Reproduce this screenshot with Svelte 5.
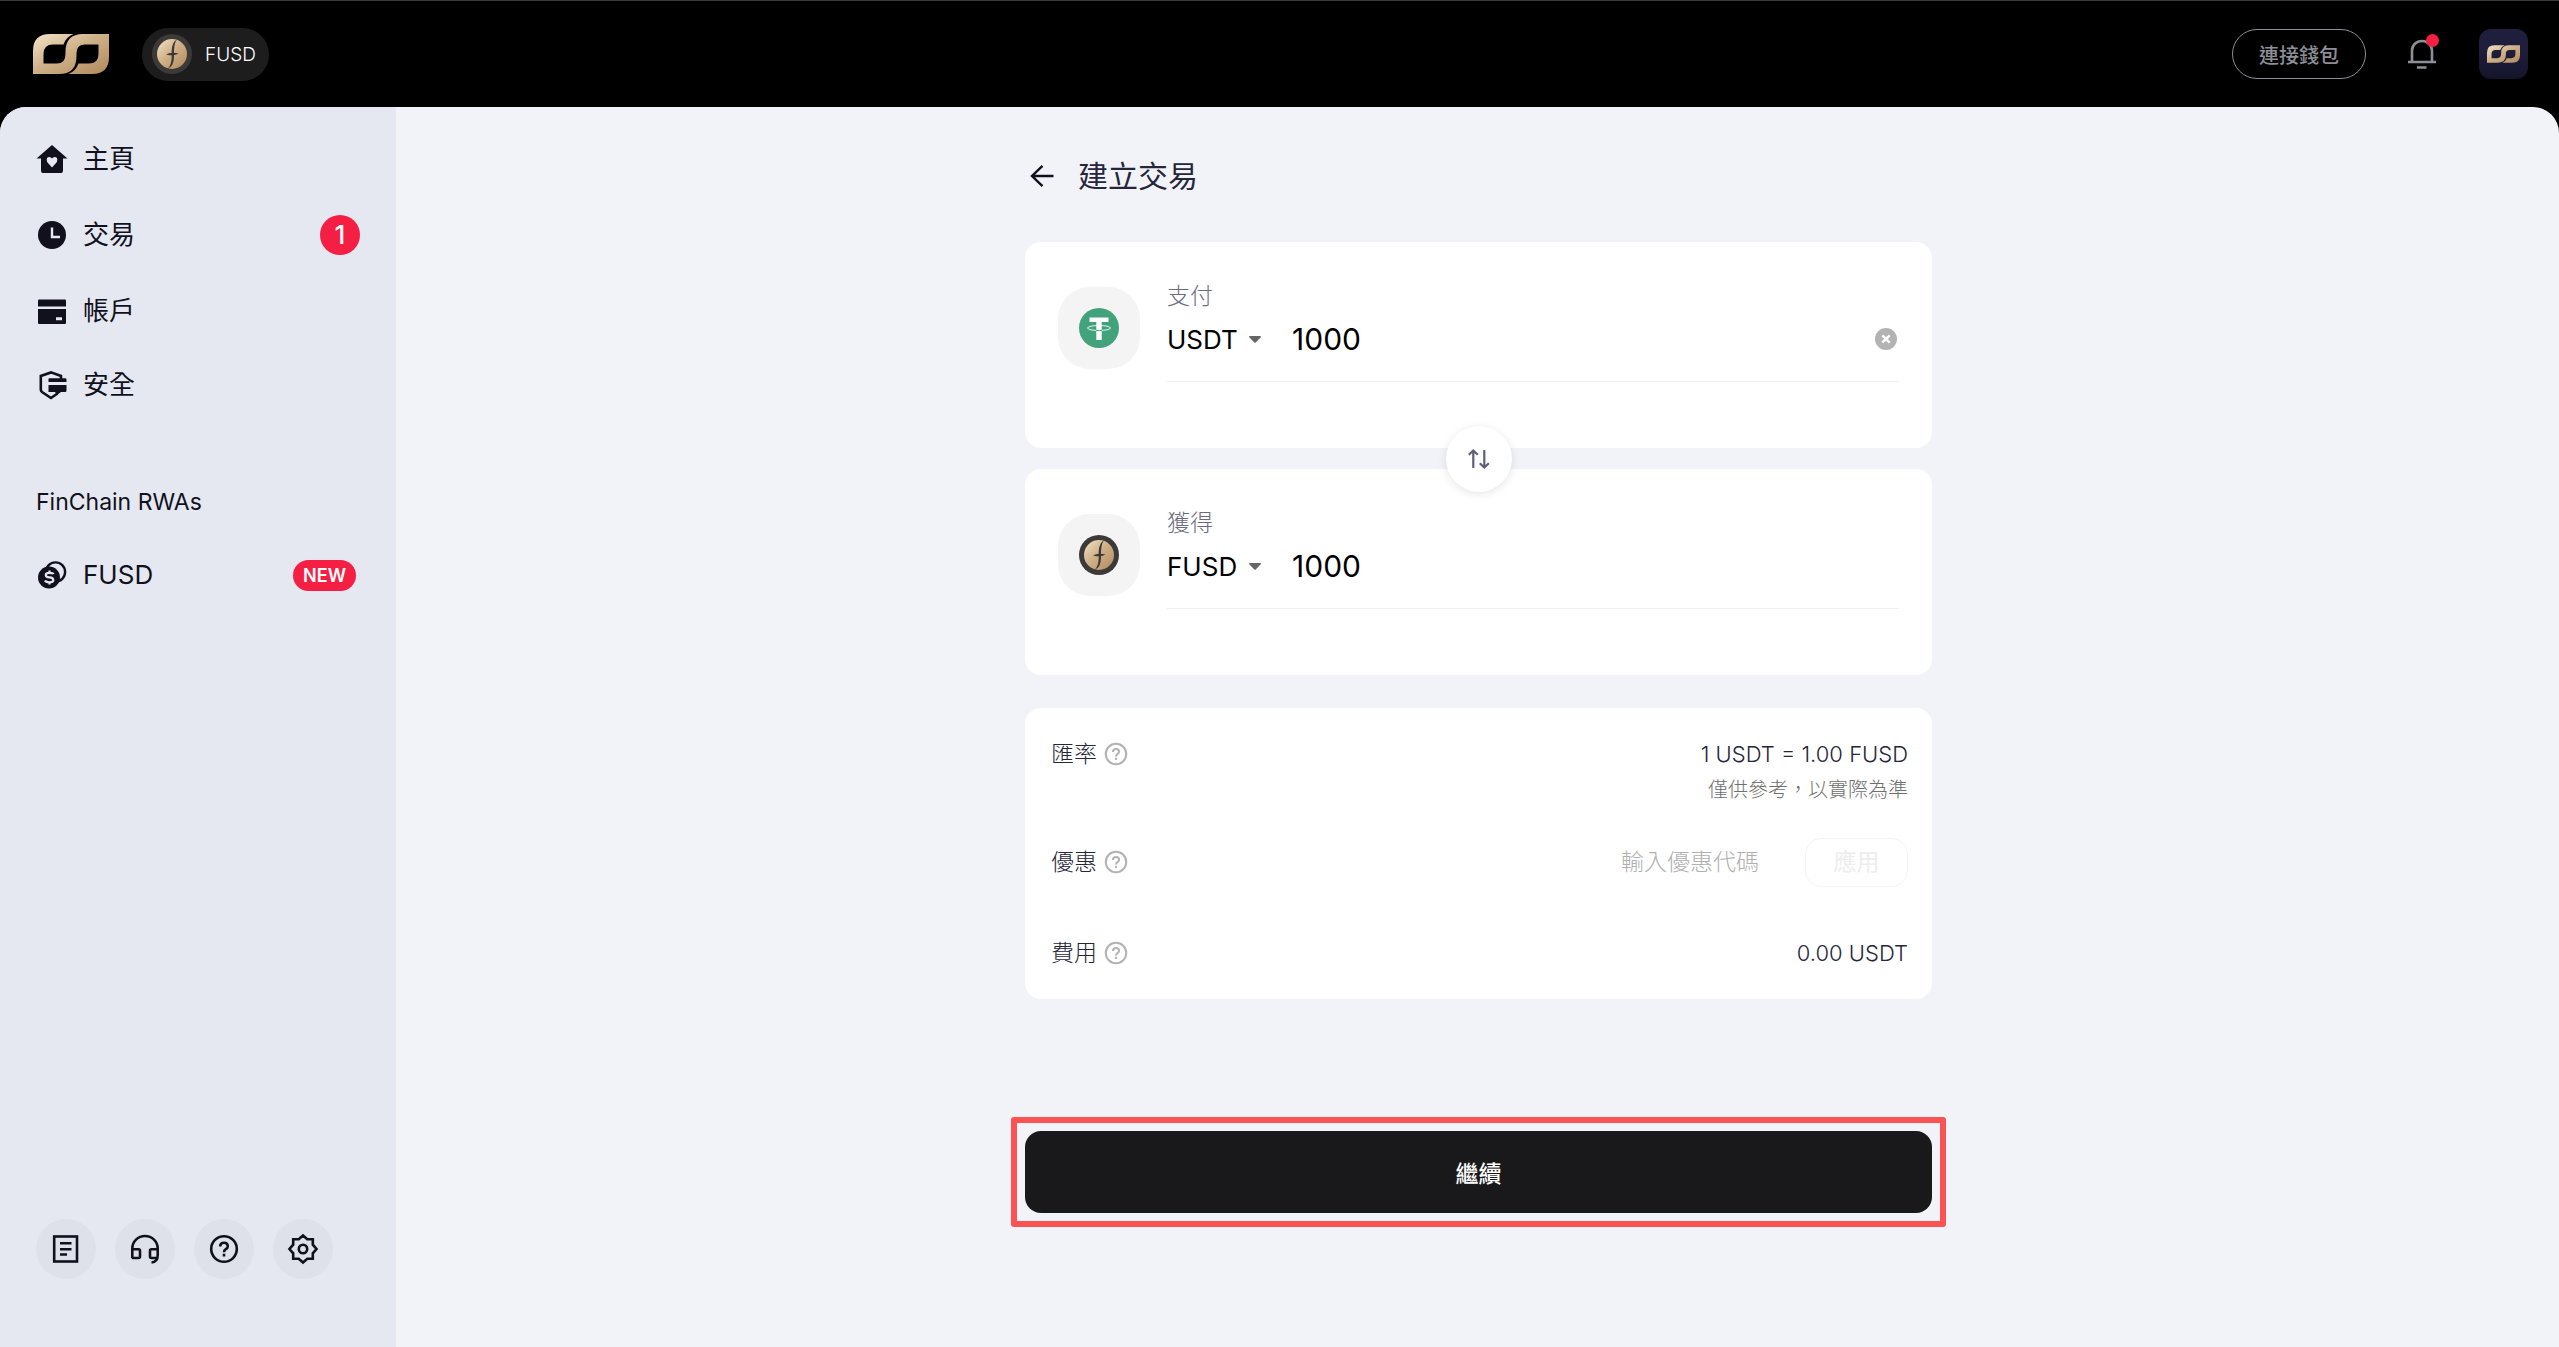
<script lang="ts">
	const navItems = [
		{ icon: 'home', label: '主頁', count: 0 },
		{ icon: 'clock', label: '交易', count: 1 },
		{ icon: 'card', label: '帳戶', count: 0 },
		{ icon: 'shield', label: '安全', count: 0 }
	];
	const tools = [
		{ icon: 'doc', title: '文件' },
		{ icon: 'support', title: '客服' },
		{ icon: 'help', title: '幫助' },
		{ icon: 'gear', title: '設定' }
	];

	let pay = $state({ id: 'pay', label: '支付', token: 'USDT', amount: '1000' });
	let receive = $state({ id: 'receive', label: '獲得', token: 'FUSD', amount: '1000' });
	let promo = $state('');
	let sides = $derived([pay, receive]);

	function swap() {
		const token = pay.token;
		pay.token = receive.token;
		receive.token = token;
	}
</script>

{#snippet logo()}
	<svg class="logo" viewBox="0 0 76 40" aria-hidden="true">
		<defs>
			<linearGradient id="gold" x1="0" y1="0" x2="1" y2="1">
				<stop offset="0" stop-color="#f3e4c8" />
				<stop offset="0.45" stop-color="#d0b289" />
				<stop offset="1" stop-color="#b08a5c" />
			</linearGradient>
		</defs>
		<path
			fill="url(#gold)"
			d="M0 40V17Q0 0 17 0H40.500Q33 3 30.500 10.500H20Q10.500 10.500 10.500 20V29.500H24Q32.500 29.500 32.500 20V18Q32.500 0 50 0H76V23Q76 40 59 40H35.500Q43 37 45.500 29.500H56Q65.500 29.500 65.500 20V10.500H52Q43.500 10.500 43.500 19V22Q43.500 40 26 40Z"
		/>
	</svg>
{/snippet}

{#snippet coin()}
	<svg class="coin" viewBox="-20 -20 40 40" aria-hidden="true">
		<circle r="20" fill="#3b3a38" />
		<circle r="15" fill="url(#gold)" />
		<path
			d="M5 -14.500Q0 -12.500 -0.300 -3V3Q-0.500 11 -4 14.500Q1.800 12.500 2 3V-3Q2.200 -11 5 -14.500Z"
			fill="#3b3a38"
		/>
		<path d="M-6 0.400Q-3 -0.900 0 -1.200Q4 -0.900 6.500 -0.400Q4 1.200 1 1.300Q-3 1.300 -6 0.400Z" fill="#3b3a38" />
	</svg>
{/snippet}

{#snippet helpIcon()}
	<svg viewBox="0 0 30 30" fill="none" stroke="currentColor" stroke-width="2.6" aria-hidden="true">
		<circle cx="15" cy="15" r="12.800" />
		<path d="M11.200 12.400Q11.200 8.800 15 8.800T18.800 12.200Q18.800 14 16.800 15.200Q15 16.300 15 18.200M15 19.800V22.400" />
	</svg>
{/snippet}

<div class="page">
	<header class="topbar">
		<a class="brand" href="#home" aria-label="FinChain">{@render logo()}</a>
		<button class="token-pill" type="button">
			{@render coin()}
			<span>FUSD</span>
		</button>
		<div class="topbar-right">
			<button class="connect" type="button">連接錢包</button>
			<button class="bell" type="button" aria-label="通知">
				<svg viewBox="0 0 28 32" fill="none" stroke="#8d8f96" stroke-width="2.6">
					<path d="M4 23V12.500A10 9.500 0 0 1 24 12.500V23M0 24H28M9 29.500H18.500" />
				</svg>
				<span class="dot"></span>
			</button>
			<button class="avatar" type="button" aria-label="個人資料">{@render logo()}</button>
		</div>
	</header>

	<div class="body">
		<aside class="sidebar">
			<nav class="nav">
				{#each navItems as item}
					<a class="nav-item" href="#{item.icon}">
						<svg class="nav-icon" viewBox="0 0 30 30" fill="#11111d" aria-hidden="true">
							{#if item.icon === 'home'}
								<path d="M15 1L30.500 14.500H26V27Q26 29 24 29H6Q4 29 4 27V14.500H-0.500Z" />
								<path
									fill="#e5e8f1"
									d="M15 23.500L10.300 18.200Q8.800 14.800 11 13.300Q13.500 12.200 15 14.500Q16.500 12.200 19 13.300Q21.200 14.800 19.700 18.200Z"
								/>
							{:else if item.icon === 'clock'}
								<circle cx="15" cy="15" r="14" />
								<path d="M15 7.500V17H23" fill="none" stroke="#e5e8f1" stroke-width="2.4" />
							{:else if item.icon === 'card'}
								<path d="M2 3.500H28Q29 3.500 29 4.500V10.500H1V4.500Q1 3.500 2 3.500Z" />
								<path fill-rule="evenodd" d="M1 13H29V27Q29 28 28 28H2Q1 28 1 27ZM19 21.300V24.300H25V21.300Z" />
							{:else}
								<path
									d="M24 9V6L14 2.400L3.800 6V19.500Q3.800 21 5 22L14 28L20.500 23.500"
									fill="none"
									stroke="#11111d"
									stroke-width="2.6"
								/>
								<path d="M12 8.300H28Q29.500 8.300 29.500 9.500V12H11.500V8.800ZM11.500 15H29.500V20.500Q29.500 22 28 22H24L20 25L18 22H11.500Z" />
							{/if}
						</svg>
						<span>{item.label}</span>
						{#if item.count}
							<span class="count">{item.count}</span>
						{/if}
					</a>
				{/each}
			</nav>

			<h2 class="group">FinChain RWAs</h2>
			<a class="nav-item" href="#fusd">
				<svg class="nav-icon" viewBox="0 0 30 30" aria-hidden="true">
					<circle cx="18.500" cy="12" r="9.600" fill="none" stroke="#11111d" stroke-width="2.4" />
					<circle cx="12" cy="17.500" r="11" fill="#11111d" />
					<path
						d="M16.500 14.200Q16 12.800 12.500 12.800Q8.800 12.800 8.800 15T12.500 17.400T16.300 20T12.300 22.300Q8.800 22.300 8 20.500M12.500 10.500V13M12.500 22V24.600"
						fill="none"
						stroke="#e5e8f1"
						stroke-width="2.2"
					/>
				</svg>
				<span>FUSD</span>
				<span class="new">NEW</span>
			</a>

			<div class="tools">
				{#each tools as tool}
					<button class="tool" type="button" aria-label={tool.title}>
						{#if tool.icon === 'help'}
							{@render helpIcon()}
						{:else}
							<svg viewBox="0 0 30 30" fill="none" stroke="currentColor" stroke-width="2.6" aria-hidden="true">
								{#if tool.icon === 'doc'}
									<rect x="3.200" y="2.500" width="22.800" height="25" />
									<path d="M9 9.300H20.500M9 15.200H20.500M9 20.500H16" />
								{:else if tool.icon === 'support'}
									<path d="M2.300 24V14.500A12.700 12.500 0 0 1 27.700 14.500V21Q27.700 28 21.500 28.500M2.300 15.200H8.500Q10 15.200 10 16.700V22.500Q10 24 8.500 24H3.500Q2.300 24 2.300 22.500M27.700 15.200H21.500Q20 15.200 20 16.700V22.500Q20 24 21.500 24H27" />
								{:else}
									<path d="M15 1.500L19.300 5.200H24.800V10.700L28.500 15L24.800 19.300V24.800H19.300L15 28.500L10.700 24.800H5.200V19.300L1.500 15L5.200 10.700V5.200H10.700Z" />
									<circle cx="15" cy="15" r="4.200" />
								{/if}
							</svg>
						{/if}
					</button>
				{/each}
			</div>
		</aside>

		<main class="main">
			<form class="exchange" onsubmit={(e) => e.preventDefault()}>
				<div class="title-row">
					<button class="back" type="button" aria-label="返回">
						<svg viewBox="0 0 24 24" fill="none" stroke="#11111d" stroke-width="2.4">
							<path d="M23.500 12H2M12.500 1.800L2 12L12.500 22.200" />
						</svg>
					</button>
					<h1>建立交易</h1>
				</div>

				<div class="pair">
					{#each sides as side}
						<section class="card currency">
							<div class="token-box">
								{#if side.token === 'USDT'}
									<svg class="coin" viewBox="-20 -20 40 40" aria-hidden="true">
										<circle r="20" fill="#41a27c" />
										<ellipse rx="11.500" ry="2.500" fill="none" stroke="#fff" stroke-width="0.9" />
										<path d="M-9.500 -10.500H9.500V-6H2.700V12H-2.700V-6H-9.500Z" fill="#fff" />
										<path d="M-3 2.500H3" stroke="#41a27c" stroke-width="0.9" />
									</svg>
								{:else}
									{@render coin()}
								{/if}
							</div>
							<div class="field">
								<label class="field-label" for={side.id}>{side.label}</label>
								<div class="field-row">
									<select class="token" bind:value={side.token} aria-label="{side.label}幣種">
										<option>{side.token}</option>
									</select>
									<svg class="caret" viewBox="0 0 12 7" aria-hidden="true">
										<path d="M0.500 0H11.500L12 1L6.500 6.800H5.500L0 1Z" fill="#666" />
									</svg>
									<input class="amount" id={side.id} type="text" inputmode="decimal" bind:value={side.amount} />
									{#if side.id === 'pay'}
										<button class="clear" type="button" aria-label="清除" onclick={() => (side.amount = '')}>
											<svg viewBox="0 0 22 22">
												<circle cx="11" cy="11" r="11" fill="#b3b3b3" />
												<path d="M7.300 7.300L14.700 14.700M14.700 7.300L7.300 14.700" stroke="#fff" stroke-width="2.4" />
											</svg>
										</button>
									{/if}
								</div>
							</div>
						</section>
					{/each}
					<button class="swap" type="button" aria-label="交換" onclick={swap}>
						<svg viewBox="0 0 22 20" fill="none" stroke="#5f5f78" stroke-width="2.2">
							<path d="M5.300 19V2M0.800 5.800L5.300 1.500L9.800 5.800M16.300 1V18M11.800 14.200L16.300 18.500L20.800 14.200" />
						</svg>
					</button>
				</div>

				<section class="card details">
					<div class="row rate">
						<span class="row-label">匯率 {@render helpIcon()}</span>
						<div class="row-value">
							<div>1 USDT = 1.00 FUSD</div>
							<div class="note">僅供參考，以實際為準</div>
						</div>
					</div>
					<div class="row">
						<label class="row-label" for="promo">優惠 {@render helpIcon()}</label>
						<input class="promo" id="promo" type="text" placeholder="輸入優惠代碼" bind:value={promo} />
						<button class="apply" type="button" disabled={!promo}>應用</button>
					</div>
					<div class="row">
						<span class="row-label">費用 {@render helpIcon()}</span>
						<div class="row-value">0.00 USDT</div>
					</div>
				</section>

				<div class="highlight">
					<button class="submit" type="submit">繼續</button>
				</div>
			</form>
		</main>
	</div>
</div>

<style>
	:global(body) {
		margin: 0;
		background: #000;
	}

	.page {
		display: flex;
		flex-direction: column;
		min-height: 100vh;
		box-sizing: border-box;
		border-top: 1px solid #3a3a3a;
		background: #000;
		color: #11111d;
		font-family: Inter, 'Noto Sans CJK TC', sans-serif;
		font-size: 26px;
	}

	button,
	input,
	select {
		margin: 0;
		padding: 0;
		border: 0;
		outline: 0;
		background: none;
		color: inherit;
		font: inherit;
	}

	button {
		display: flex;
		align-items: center;
		justify-content: center;
		cursor: pointer;
	}

	a {
		color: inherit;
		text-decoration: none;
	}

	svg {
		display: block;
		flex: none;
		overflow: visible;
	}

	/* top bar */
	.topbar {
		display: flex;
		align-items: center;
		height: 106px;
		padding: 0 31px 0 33px;
	}

	.logo {
		width: 76px;
		height: 40px;
	}

	.coin {
		width: 40px;
		height: 40px;
	}

	.token-pill {
		gap: 13px;
		height: 53px;
		margin-left: 33px;
		padding: 0 13px 0 10px;
		border-radius: 27px;
		background: #1d1d1d;
		color: #fff;
		font-size: 19px;
		font-weight: 300;
	}

	.topbar-right {
		display: flex;
		align-items: center;
		margin-left: auto;
	}

	.connect {
		height: 50px;
		padding: 0 26px;
		border: 1px solid #8d8f96;
		border-radius: 25px;
		color: #8d8f96;
		font-size: 20px;
		font-weight: 500;
	}

	.bell {
		position: relative;
		margin: 0 43px 0 42px;
	}

	.bell svg {
		width: 28px;
		height: 32px;
	}

	.dot {
		position: absolute;
		top: -4px;
		right: -3px;
		width: 13px;
		height: 13px;
		border-radius: 50%;
		background: #f51f44;
	}

	.avatar {
		width: 49px;
		height: 50px;
		border-radius: 12px;
		background: linear-gradient(#1f1f3d 40%, #14142b);
	}

	.avatar .logo {
		width: 33px;
		height: 18px;
	}

	.body {
		display: flex;
		flex: 1;
		overflow: hidden;
		border-radius: 26px 26px 0 0;
		background: #f2f3f9;
	}

	/* sidebar */
	.sidebar {
		display: flex;
		flex: none;
		flex-direction: column;
		width: 396px;
		box-sizing: border-box;
		padding: 34px 36px 68px;
		background: #e5e8f1;
	}

	.nav {
		display: flex;
		flex-direction: column;
		gap: 38px;
	}

	.nav-item {
		display: flex;
		align-items: center;
		min-height: 36px;
		line-height: 36px;
	}

	.nav-icon {
		width: 30px;
		height: 30px;
		margin: 0 16px 0 1px;
	}

	.count,
	.new {
		margin-left: auto;
		background: #f51f44;
		color: #fff;
		text-align: center;
	}

	.count {
		width: 40px;
		border-radius: 50%;
		line-height: 40px;
		font-weight: 500;
	}

	.new {
		margin-right: 4px;
		padding: 0 10px;
		border-radius: 16px;
		font-size: 18px;
		font-weight: 600;
		line-height: 31px;
	}

	.group {
		margin: 81px 0 37px;
		font-size: 23px;
		font-weight: 400;
		line-height: 36px;
	}

	.tools {
		display: flex;
		gap: 19px;
		margin-top: auto;
	}

	.tool {
		width: 60px;
		height: 60px;
		border-radius: 50%;
		background: #dee1e9;
	}

	.tool svg {
		width: 30px;
		height: 30px;
	}

	/* exchange form */
	.main {
		display: flex;
		flex: 1;
		justify-content: center;
		min-width: 0;
		padding: 45px 32px 45px 34px;
	}

	.exchange {
		width: 100%;
		max-width: 907px;
	}

	.title-row {
		display: flex;
		align-items: center;
		gap: 24px;
		height: 48px;
		margin-bottom: 42px;
		padding-left: 5px;
	}

	.back svg {
		width: 24px;
		height: 24px;
	}

	h1 {
		margin: 0;
		color: #26263a;
		font-size: 30px;
		font-weight: 400;
		line-height: 48px;
	}

	.card {
		border-radius: 16px;
		background: #fff;
	}

	.pair {
		position: relative;
		display: flex;
		flex-direction: column;
		gap: 21px;
	}

	.currency {
		display: flex;
		gap: 27px;
		padding: 39px 33px 66px;
	}

	.token-box {
		display: flex;
		flex: none;
		align-items: center;
		justify-content: center;
		width: 82px;
		height: 82px;
		margin-top: 6px;
		border-radius: 32px;
		background: #f4f4f4;
	}

	.field {
		flex: 1;
		min-width: 0;
		padding-bottom: 14px;
		border-bottom: 1px solid #f0f0f0;
	}

	.field-label {
		display: block;
		color: #6b6b80;
		font-size: 23px;
		font-weight: 300;
		line-height: 30px;
	}

	.field-row {
		display: flex;
		align-items: center;
		height: 56px;
		color: #000;
	}

	.token {
		appearance: none;
	}

	.caret {
		width: 12px;
		height: 7px;
		margin: 0 31px 0 11px;
	}

	.amount {
		flex: 1;
		min-width: 0;
		font-size: 30px;
	}

	.clear {
		margin-right: 2px;
	}

	.clear svg {
		width: 22px;
		height: 22px;
	}

	.swap {
		position: absolute;
		top: calc(50% - 33px);
		left: calc(50% - 33px);
		width: 66px;
		height: 66px;
		border-radius: 50%;
		background: #fff;
		box-shadow: 0 2px 10px rgba(0, 0, 0, 0.1);
	}

	.swap svg {
		width: 22px;
		height: 20px;
	}

	.details {
		display: flex;
		flex-direction: column;
		gap: 17px;
		margin-top: 33px;
		padding: 26px 24px 9px 26px;
		color: #26263a;
		font-size: 23px;
		font-weight: 300;
		line-height: 36px;
	}

	.row {
		display: flex;
		align-items: center;
		min-height: 74px;
		box-sizing: border-box;
	}

	.rate {
		align-items: flex-start;
		padding-top: 2px;
	}

	.row-label {
		display: flex;
		align-items: center;
		gap: 7px;
	}

	.row-label svg {
		width: 24px;
		height: 24px;
		color: #b3b3b3;
	}

	.row-value {
		margin-left: auto;
		font-size: 22px;
		text-align: right;
	}

	.note {
		color: #6f6f6f;
		font-size: 20px;
	}

	.promo {
		width: 160px;
		margin: 0 24px 0 auto;
	}

	.promo::placeholder {
		color: #b0b0b0;
		opacity: 1;
	}

	.apply {
		width: 103px;
		height: 49px;
		border: 1px solid #f4f4f4;
		border-radius: 16px;
		color: #ededed;
		font-weight: 400;
	}

	.highlight {
		margin: 118px -14px 0;
		padding: 8px;
		border: 6px solid #fb5353;
		border-radius: 3px;
	}

	.submit {
		width: 100%;
		height: 82px;
		border-radius: 16px;
		background: #19191b;
		color: #fff;
		font-size: 23px;
		font-weight: 500;
	}
</style>
